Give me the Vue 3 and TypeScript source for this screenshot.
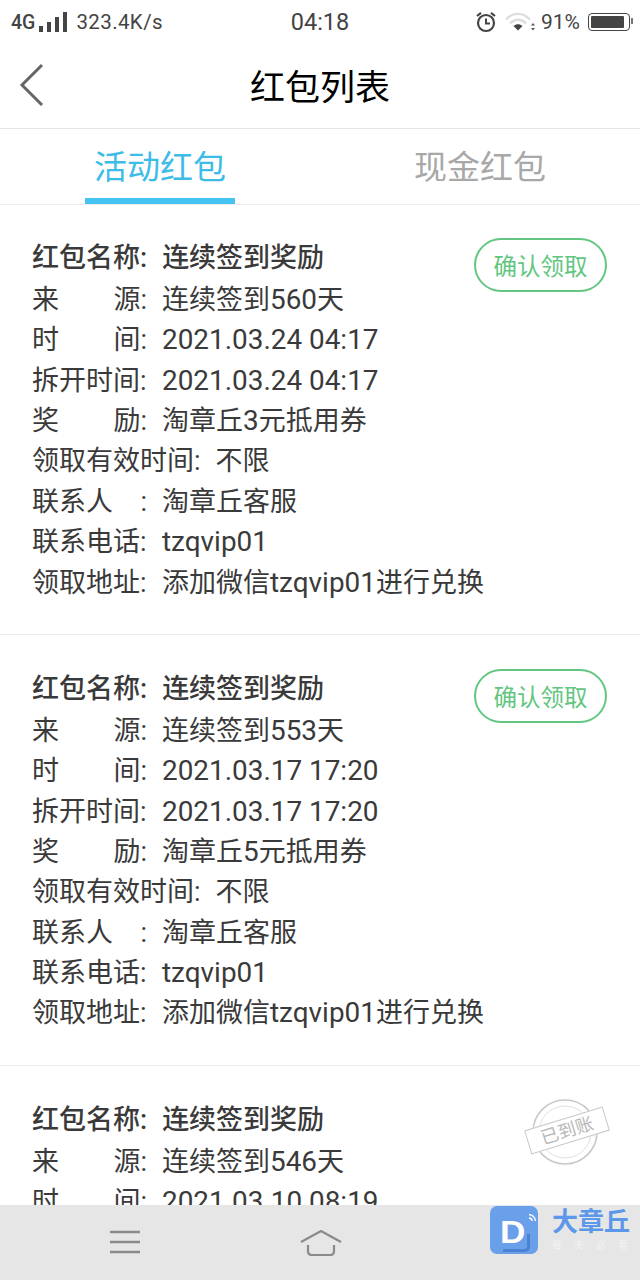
<script setup lang="ts">
interface Row {
  label: string
  value: string
  spread?: boolean
}

interface Packet {
  source: string
  time: string
  reward: string
  received: boolean
}

const packets: Packet[] = [
  { source: '连续签到560天', time: '2021.03.24 04:17', reward: '淘章丘3元抵用券', received: false },
  { source: '连续签到553天', time: '2021.03.17 17:20', reward: '淘章丘5元抵用券', received: false },
  { source: '连续签到546天', time: '2021.03.10 08:19', reward: '淘章丘3元抵用券', received: true },
]

const rowsFor = (p: Packet): Row[] => [
  { label: '红包名称', value: '连续签到奖励' },
  { label: '来源', value: p.source, spread: true },
  { label: '时间', value: p.time, spread: true },
  { label: '拆开时间', value: p.time },
  { label: '奖励', value: p.reward, spread: true },
  { label: '领取有效时间', value: '不限' },
  { label: '联系人', value: '淘章丘客服' },
  { label: '联系电话', value: 'tzqvip01' },
  { label: '领取地址', value: '添加微信tzqvip01进行兑换' },
]

// latin runs are set a bit larger than the chinese ones
const chunks = (text: string): string[] => text.match(/[\x20-\x7e]+|[^\x20-\x7e]+/g) ?? []
const isLatin = (text: string) => /^[\x20-\x7e]/.test(text)
</script>

<template>
  <div class="page">
    <div class="status">
      <div class="status-left">
        <span class="net">4G</span>
        <span class="bars"><i></i><i></i><i></i><i></i></span>
        <span class="speed">323.4K/s</span>
      </div>
      <span class="clock">04:18</span>
      <div class="status-right">
        <svg width="22" height="24" viewBox="0 0 22 24" fill="none" stroke="#444" stroke-width="2.2">
          <circle cx="11" cy="13" r="8" />
          <path d="M11 8.500V13.500H15" stroke-width="2" />
          <path d="M2 6L6 2.800M20 6L16 2.800" />
        </svg>
        <svg class="wifi" width="30" height="22" viewBox="0 0 30 22" fill="none">
          <path d="M0 8.500C7 1 17 1 24 8.500" stroke="#ddd" stroke-width="2.400" />
          <path d="M4 12.500C9 7.500 15 7.500 20 12.500" stroke="#ddd" stroke-width="2.400" />
          <path d="M7.500 15C10.500 12.500 13.500 12.500 16.500 15L12 19.500Z" fill="#444" />
          <path d="M27 12L25 14.500H29ZM27 19.500L25 17H29Z" fill="#555" />
        </svg>
        <span class="pct">91%</span>
        <span class="battery"><i></i></span>
      </div>
    </div>

    <header class="nav">
      <svg class="back" width="26" height="44" viewBox="0 0 26 44" fill="none" stroke="#666" stroke-width="3">
        <path d="M23 2L3 22L23 42" />
      </svg>
      <h1>红包列表</h1>
    </header>

    <div class="tabs">
      <div class="tab active"><span>活动红包</span></div>
      <div class="tab"><span>现金红包</span></div>
    </div>

    <div class="list">
      <section v-for="p in packets" :key="p.source" class="card">
        <div
          v-for="(r, i) in rowsFor(p)"
          :key="r.label"
          class="row"
          :class="{ strong: i === 0 }"
        >
          <span class="label" :class="{ spread: r.spread, contact: r.label === '联系人' }">
            <template v-if="r.spread">
              <span>{{ r.label[0] }}</span><span>{{ r.label[1] }}:</span>
            </template>
            <template v-else-if="r.label === '联系人'">
              <span>{{ r.label }}</span><span class="colon">:</span>
            </template>
            <template v-else>{{ r.label }}:</template>
          </span>
          <span class="value">
            <span v-for="c in chunks(r.value)" :key="c" :class="{ latin: isLatin(c) }">{{ c }}</span>
          </span>
        </div>

        <button v-if="!p.received" class="confirm">确认领取</button>
        <div v-else class="stamp">
          <svg width="84" height="70" viewBox="0 0 84 70" fill="none">
            <circle cx="42" cy="35" r="32" stroke="#c8c8c8" stroke-width="1.600" />
            <circle cx="42" cy="35" r="26" stroke="#e0e0e0" stroke-width="1" />
          </svg>
          <span class="stamp-tag">已到账</span>
        </div>
      </section>
    </div>

    <footer class="bottom">
      <svg class="menu" width="30" height="24" viewBox="0 0 30 24" stroke="#8a8a8a" stroke-width="2.400">
        <path d="M0 2H30M0 12H30M0 22H30" />
      </svg>
      <svg class="home" width="42" height="26" viewBox="0 0 42 26" fill="none" stroke="#8a8a8a" stroke-width="2.200">
        <path d="M1 12L21 1L41 12" />
        <path d="M8 15V21Q8 25 12 25H30Q34 25 34 21V15" />
      </svg>
    </footer>

    <div class="mark">
      <div class="mark-icon">
        <svg class="mark-signal" width="14" height="14" viewBox="0 0 14 14" fill="none" stroke="#fff" stroke-width="1.400">
          <path d="M6 1.500A7 7 0 0 1 12.500 8M6 5A3.500 3.500 0 0 1 9.200 8" />
        </svg>
        <span class="mark-d">D</span>
        <span class="mark-fold"></span>
      </div>
      <div class="mark-text">
        <div class="mark-name">大章丘</div>
        <div class="mark-sub">每天必看</div>
      </div>
    </div>
  </div>
</template>

<style>
html,
body {
  margin: 0;
  background: #fff;
}
</style>

<style scoped>
.page {
  position: relative;
  width: 640px;
  height: 1280px;
  display: flex;
  flex-direction: column;
  overflow: hidden;
  background: #fff;
  font-family: Roboto, "Noto Sans CJK SC", sans-serif;
  color: #3a3a3a;
}

.status {
  flex: none;
  height: 46px;
  display: grid;
  grid-template-columns: 1fr auto 1fr;
  align-items: center;
  padding: 0 8px 2px 11px;
  box-sizing: border-box;
  color: #444;
}

.status-left,
.status-right {
  display: flex;
  align-items: center;
}

.status-right {
  justify-content: flex-end;
}

.net {
  font-size: 19.500px;
  font-weight: 500;
}

.bars {
  display: flex;
  align-items: flex-end;
  gap: 4px;
  margin: 0 9px 0 4px;
  height: 20px;
}

.bars i {
  width: 4px;
  background: #444;
}

.bars i:nth-child(1) { height: 6px; }
.bars i:nth-child(2) { height: 10px; }
.bars i:nth-child(3) { height: 15px; }
.bars i:nth-child(4) { height: 20px; }

.speed {
  font-size: 20.500px;
  letter-spacing: 0.400px;
}

.clock {
  font-size: 23.500px;
  margin-left: -3px;
}

.wifi {
  margin-left: 9px;
}

.pct {
  font-size: 21px;
  margin-left: 5px;
}

.battery {
  position: relative;
  width: 42px;
  height: 18px;
  margin-left: 8px;
  margin-right: 2px;
  padding: 2px;
  box-sizing: border-box;
  border: 1.500px solid #444;
  border-radius: 4px;
}

.battery::after {
  content: "";
  position: absolute;
  right: -4px;
  top: 4px;
  width: 2px;
  height: 6px;
  background: #777;
}

.battery i {
  display: block;
  height: 100%;
  width: 91%;
  background: #444;
  border-radius: 1px;
}

.nav {
  flex: none;
  position: relative;
  height: 83px;
  display: flex;
  align-items: center;
  justify-content: center;
  border-bottom: 1px solid #e4e4e4;
  padding-bottom: 5px;
  box-sizing: border-box;
}

.back {
  position: absolute;
  left: 19px;
  top: 17px;
}

h1 {
  margin: 0;
  font-size: 35px;
  font-weight: 400;
  color: #000;
}

.tabs {
  flex: none;
  height: 76px;
  display: flex;
  border-bottom: 1px solid #eee;
  box-sizing: border-box;
}

.tab {
  flex: 1;
  display: flex;
  justify-content: center;
  font-size: 33px;
  color: #a8a8a8;
}

.tab span {
  width: 150px;
  height: 75px;
  padding-top: 15px;
  box-sizing: border-box;
  text-align: center;
  line-height: 48px;
}

.tab.active span {
  color: #3dbce8;
  border-bottom: 6px solid #45c3f2;
}

.list {
  flex: 1;
  min-height: 0;
  margin-top: -1px;
  overflow: hidden;
}

.card {
  position: relative;
  padding: 34px 32px 31px;
  border-bottom: 1px solid #ececec;
}

.row {
  display: flex;
  height: 40.400px;
  line-height: 40.400px;
  align-items: baseline;
  font-size: 27px;
  white-space: nowrap;
}

.row.strong {
  height: 41.800px;
  font-weight: 500;
}

.label {
  margin-right: 15px;
  min-width: 115px;
}

.label.spread,
.label.contact {
  display: flex;
  justify-content: space-between;
  width: 115px;
}

.latin {
  font-size: 27.900px;
}

.confirm {
  position: absolute;
  top: 34px;
  right: 33px;
  width: 133px;
  height: 54px;
  padding: 0;
  border: 2px solid #63c680;
  border-radius: 27px;
  background: #fff;
  color: #63c680;
  font-family: inherit;
  font-size: 23.500px;
}

.stamp {
  position: absolute;
  top: 31px;
  right: 29px;
  width: 88px;
  height: 70px;
}

.stamp-tag {
  position: absolute;
  left: 3px;
  top: 21px;
  width: 82px;
  height: 25px;
  line-height: 23px;
  box-sizing: border-box;
  border: 1.500px solid #c8c8c8;
  background: #fff;
  color: #b8b8b8;
  font-size: 18px;
  text-align: center;
  transform: rotate(-17deg);
}

.bottom {
  flex: none;
  height: 75px;
  display: flex;
  align-items: flex-start;
  padding: 25px 0 0 110px;
  box-sizing: border-box;
  background: #e6e6e6;
}

.home {
  margin-left: 160px;
}

.mark {
  position: absolute;
  left: 490px;
  top: 1206px;
  display: flex;
  gap: 14px;
}

.mark-icon {
  position: relative;
  width: 48px;
  height: 48px;
  background: #6aa0ea;
  border-radius: 7px;
  overflow: hidden;
}

.mark-signal {
  position: absolute;
  right: 1px;
  top: 7px;
}

.mark-d {
  position: absolute;
  left: 10px;
  top: 12px;
  font-family: "Liberation Sans", sans-serif;
  font-size: 32px;
  line-height: 28px;
  font-weight: 700;
  color: #fff;
  transform: scaleX(1.100);
  transform-origin: left center;
}

.mark-fold {
  position: absolute;
  left: 13px;
  top: 28px;
  width: 27px;
  height: 18px;
  border-right: 3px solid #4a82d4;
  border-bottom: 3px solid #4a82d4;
  border-radius: 0 0 5px 0;
  box-sizing: border-box;
}

.mark-name {
  font-size: 26px;
  line-height: 30px;
  font-weight: 700;
  color: #5d97ea;
  margin-top: 1px;
}

.mark-sub {
  margin-top: 3px;
  font-size: 10px;
  line-height: 12px;
  letter-spacing: 12px;
  color: #f2f2f2;
  white-space: nowrap;
}
</style>
